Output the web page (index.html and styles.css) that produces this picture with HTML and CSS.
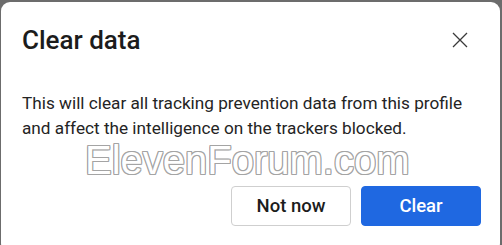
FILE: index.html
```html
<!DOCTYPE html>
<html lang="en">
<head>
<meta charset="utf-8">
<link rel="stylesheet" href="styles.css">
</head>
<body>
<div class="dialog">
  <div class="header">
    <h1 class="title">Clear data</h1>
    <button class="close" aria-label="Close">
      <svg width="16" height="16" viewBox="0 0 16 16"><path d="M1 1L15 15M15 1L1 15" stroke="#3a3a3a" stroke-width="1.3" fill="none"/></svg>
    </button>
  </div>
  <p class="text">This will clear all tracking prevention data from this profile and affect the intelligence on the trackers blocked.</p>
  <div class="footer">
    <button class="btn secondary">Not now</button>
    <button class="btn primary">Clear</button>
  </div>
  <div class="watermark">ElevenForum.com</div>
</div>
</body>
</html>
```
FILE: styles.css
```css
html, body {
  margin: 0;
  padding: 0;
  background: #6c6c6c;
  width: 502px;
  height: 245px;
  overflow: hidden;
}
.dialog {
  position: relative;
  margin: 2px 0 0 1px;
  width: 499px;
  height: 250px;
  box-sizing: border-box;
  background: #fff;
  border-radius: 9px;
  padding: 22px 19px 0 21px;
  font-family: Roboto, "Noto Sans", sans-serif;
  color: #242424;
}
.header {
  display: flex;
  align-items: center;
  justify-content: space-between;
  height: 32px;
}
.title {
  margin: 0;
  font-size: 26px;
  font-weight: 500;
  line-height: 32px;
  color: #1c1c1c;
}
.close {
  border: 0;
  background: none;
  padding: 0;
  margin: 0 13px 0 0;
  width: 16px;
  height: 16px;
  display: flex;
}
.text {
  margin: 35px 0 0;
  font-size: 17.2px;
  line-height: 25px;
  width: 460px;
}
.footer {
  display: flex;
  justify-content: flex-end;
  gap: 10px;
  margin-top: 45px;
}
.btn {
  width: 120px;
  height: 40px;
  border-radius: 4px;
  font-family: Roboto, "Noto Sans", sans-serif;
  font-size: 18.5px;
  font-weight: 500;
  cursor: pointer;
}
.secondary {
  background: #fff;
  border: 1px solid #cfcfcf;
  color: #1c1c1c;
}
.primary {
  background: #1f68e1;
  border: 1px solid #1f68e1;
  color: #fff;
}
.watermark {
  position: absolute;
  left: 84px;
  top: 138px;
  font-family: "Liberation Sans", Arial, sans-serif;
  font-size: 40px;
  line-height: 40px;
  color: #fff;
  text-shadow:
    1px 0 0 #a4a4a4, -1px 0 0 #a4a4a4, 0 1px 0 #a4a4a4, 0 -1px 0 #a4a4a4,
    1px 1px 0 #a4a4a4, -1px -1px 0 #a4a4a4, 1px -1px 0 #a4a4a4, -1px 1px 0 #a4a4a4;
  white-space: nowrap;
  pointer-events: none;
}
```
